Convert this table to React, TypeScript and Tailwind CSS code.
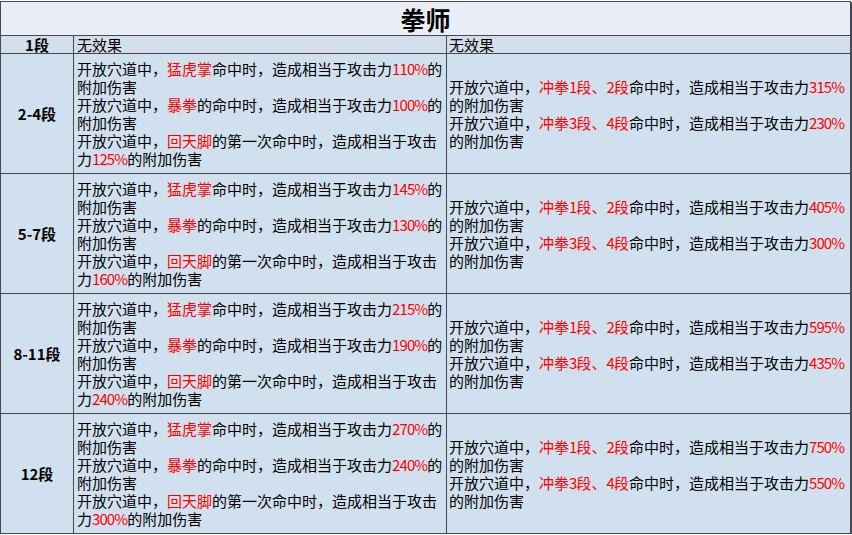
const red = "text-[#ff0000]";

type Tier = {
  label: string;
  left: string[];
  right: string[];
};

const tiers: Tier[] = [
  {
    label: "2-4段",
    left: [
      "开放穴道中，{猛虎掌}命中时，造成相当于攻击力{110%}的",
      "附加伤害",
      "开放穴道中，{暴拳}的命中时，造成相当于攻击力{100%}的",
      "附加伤害",
      "开放穴道中，{回天脚}的第一次命中时，造成相当于攻击",
      "力{125%}的附加伤害",
    ],
    right: [
      "开放穴道中，{冲拳1段、2段}命中时，造成相当于攻击力{315%}",
      "的附加伤害",
      "开放穴道中，{冲拳3段、4段}命中时，造成相当于攻击力{230%}",
      "的附加伤害",
    ],
  },
  {
    label: "5-7段",
    left: [
      "开放穴道中，{猛虎掌}命中时，造成相当于攻击力{145%}的",
      "附加伤害",
      "开放穴道中，{暴拳}的命中时，造成相当于攻击力{130%}的",
      "附加伤害",
      "开放穴道中，{回天脚}的第一次命中时，造成相当于攻击",
      "力{160%}的附加伤害",
    ],
    right: [
      "开放穴道中，{冲拳1段、2段}命中时，造成相当于攻击力{405%}",
      "的附加伤害",
      "开放穴道中，{冲拳3段、4段}命中时，造成相当于攻击力{300%}",
      "的附加伤害",
    ],
  },
  {
    label: "8-11段",
    left: [
      "开放穴道中，{猛虎掌}命中时，造成相当于攻击力{215%}的",
      "附加伤害",
      "开放穴道中，{暴拳}的命中时，造成相当于攻击力{190%}的",
      "附加伤害",
      "开放穴道中，{回天脚}的第一次命中时，造成相当于攻击",
      "力{240%}的附加伤害",
    ],
    right: [
      "开放穴道中，{冲拳1段、2段}命中时，造成相当于攻击力{595%}",
      "的附加伤害",
      "开放穴道中，{冲拳3段、4段}命中时，造成相当于攻击力{435%}",
      "的附加伤害",
    ],
  },
  {
    label: "12段",
    left: [
      "开放穴道中，{猛虎掌}命中时，造成相当于攻击力{270%}的",
      "附加伤害",
      "开放穴道中，{暴拳}的命中时，造成相当于攻击力{240%}的",
      "附加伤害",
      "开放穴道中，{回天脚}的第一次命中时，造成相当于攻击",
      "力{300%}的附加伤害",
    ],
    right: [
      "开放穴道中，{冲拳1段、2段}命中时，造成相当于攻击力{750%}",
      "的附加伤害",
      "开放穴道中，{冲拳3段、4段}命中时，造成相当于攻击力{550%}",
      "的附加伤害",
    ],
  },
];

// digits are narrower in the original (half-width), squeeze them a bit
function Narrow({ text }: { text: string }) {
  const bits = text.split(/([0-9%]+)/).filter(Boolean);
  return (
    <>
      {bits.map((b, i) =>
        /^[0-9%]+$/.test(b) ? (
          <span key={i} className="tracking-[-0.9px]">
            {b}
          </span>
        ) : (
          <span key={i}>{b}</span>
        )
      )}
    </>
  );
}

// "{...}" marks the red bits
function Line({ text }: { text: string }) {
  const parts = text.split(/(\{[^}]*\})/).filter(Boolean);
  return (
    <div className="whitespace-nowrap">
      {parts.map((part, i) =>
        part.startsWith("{") ? (
          <span key={i} className={red}>
            <Narrow text={part.slice(1, -1)} />
          </span>
        ) : (
          <Narrow key={i} text={part} />
        )
      )}
    </div>
  );
}

const cell = "border-r border-b border-[#434854]";

export default function App() {
  return (
    <div className="min-h-screen bg-white pt-px font-['Noto_Sans_CJK_SC',sans-serif] text-[15px] leading-[18px] text-black">
      <div className="grid w-[851px] grid-cols-[73px_373px_405px] border-l border-t border-[#434854]">
        <div
          className={`col-span-3 flex h-[34px] items-center justify-center border-r-2 bg-[#e9edf5] text-[25px] font-bold ${cell}`}
        >
          拳师
        </div>

        <div className={`flex h-[18px] items-center justify-center bg-[#d3ddec] font-bold ${cell}`}>1段</div>
        <div className={`flex h-[18px] items-center bg-[#d3ddec] pl-[3px] ${cell}`}>无效果</div>
        <div className={`flex h-[18px] items-center border-r-2 bg-[#d3ddec] pl-[2px] ${cell}`}>无效果</div>

        {tiers.map((tier) => (
          <div key={tier.label} className="contents">
            <div className={`flex h-[120px] items-center justify-center bg-[#d0e0ee] font-bold ${cell}`}>
              {tier.label}
            </div>
            <div className={`flex h-[120px] flex-col justify-center bg-[#d0e0ee] pl-[3px] ${cell}`}>
              {tier.left.map((line, i) => (
                <Line key={i} text={line} />
              ))}
            </div>
            <div className={`flex h-[120px] flex-col justify-center border-r-2 bg-[#d0e0ee] pl-[2px] ${cell}`}>
              {tier.right.map((line, i) => (
                <Line key={i} text={line} />
              ))}
            </div>
          </div>
        ))}
      </div>
    </div>
  );
}
